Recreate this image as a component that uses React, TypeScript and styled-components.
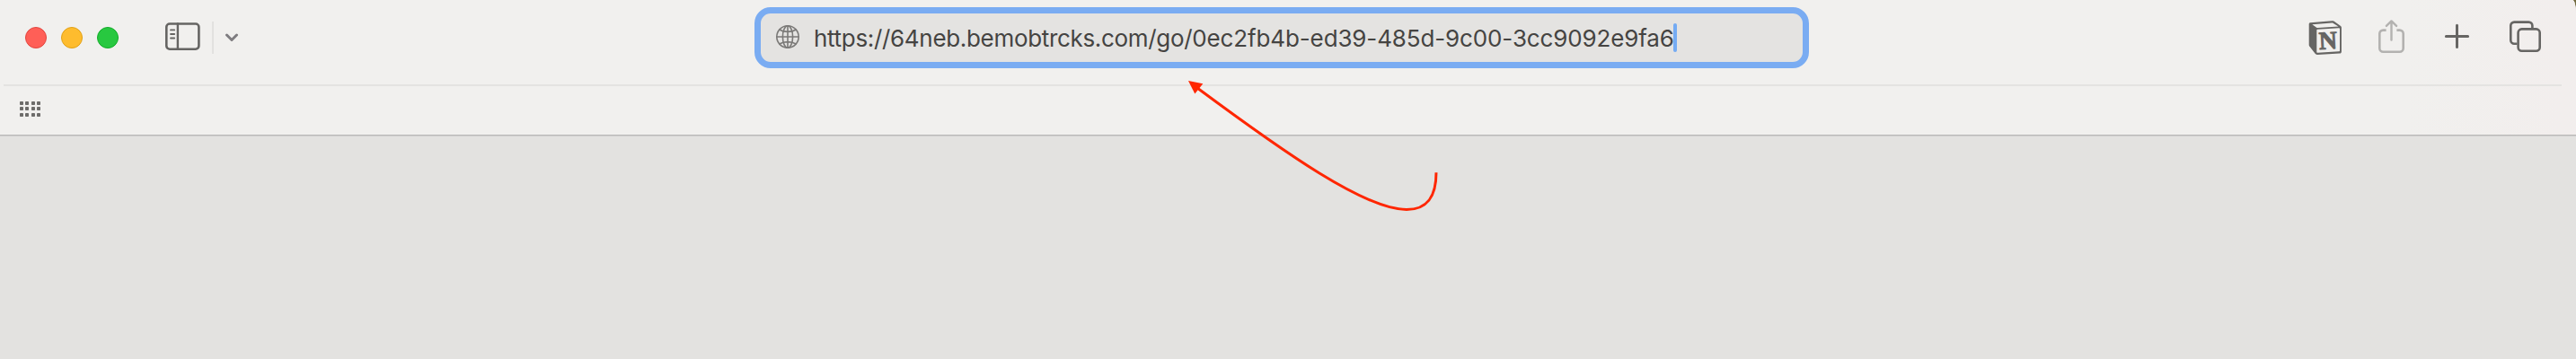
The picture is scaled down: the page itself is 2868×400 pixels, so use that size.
import React from 'react'
import styled, { createGlobalStyle } from 'styled-components'

const INK = '#666563'

const GlobalStyle = createGlobalStyle`
  * {
    box-sizing: border-box;
  }

  body {
    margin: 0;
    background: #716a3e;
  }
`

const Window = styled.div`
  position: relative;
  display: flex;
  flex-direction: column;
  width: 2868px;
  height: 400px;
  overflow: hidden;
  border-top-right-radius: 4px 14px;
  background: #e3e2e0;
  font-family: Inter, 'Liberation Sans', sans-serif;
`

const Chrome = styled.header`
  height: 152px;
  background: linear-gradient(90deg, #f1f0ee 2680px, #f2eeed 2850px);
  border-bottom: 1px solid #cfcecd;
  box-shadow: inset 0 -1px 0 #bab9b8;
`

const Toolbar = styled.div`
  display: flex;
  align-items: center;
  height: 94px;
  padding: 0 36px 10px 28px;
`

const Lights = styled.div`
  display: flex;
  gap: 16px;
  margin-right: 48px;
`

const Light = styled.span<{ $fill: string; $edge: string }>`
  width: 24px;
  height: 24px;
  border-radius: 50%;
  background: ${({ $fill }) => $fill};
  border: 1px solid ${({ $edge }) => $edge};
`

const Icon = styled.svg<{ $width?: number; $color?: string }>`
  display: block;
  flex: none;
  width: ${({ $width = 44 }) => $width}px;
  height: 44px;
  fill: none;
  stroke: ${({ $color = INK }) => $color};
  stroke-width: 2.6;
  stroke-linecap: round;
  stroke-linejoin: round;
`

const Separator = styled.span`
  width: 2px;
  height: 36px;
  margin: 0 8px;
  background: #e2e1df;
`

const AddressBar = styled.div`
  display: flex;
  align-items: center;
  width: 1174px;
  height: 68px;
  margin-left: 570px;
  padding-left: 16px;
  border: 7px solid #7aacf2;
  border-radius: 18px;
  background: #e4e3e1;
`

const Url = styled.span`
  margin-left: 15px;
  padding-top: 2px;
  color: #454442;
  font-size: 26px;
  line-height: 32px;
  white-space: nowrap;
`

const UrlPart = styled.span<{ $spacing: number }>`
  letter-spacing: ${({ $spacing }) => $spacing}px;
`

const Caret = styled.span`
  width: 4px;
  height: 32px;
  margin-left: -1px;
  border-radius: 2px;
  background: #74abf3;
`

const Actions = styled.div`
  display: flex;
  align-items: center;
  gap: 28px;
  margin-left: auto;
`

const Letter = styled.text`
  fill: ${INK};
  stroke: ${INK};
  stroke-width: 1;
  font: 700 28px 'Liberation Serif', serif;
`

const Divider = styled.div`
  height: 2px;
  margin: 0 16px 0 4px;
  background: #e4e3e1;
`

const Favorites = styled.div`
  padding: 17px 22px;
`

const Dots = styled.div`
  display: grid;
  grid-template-columns: repeat(4, 3.8px);
  grid-auto-rows: 3.8px;
  gap: 2.7px;
`

const Dot = styled.span`
  border-radius: 0.8px;
  background: #6d6c6a;
`

const Arrow = styled.svg`
  position: absolute;
  left: 1310px;
  top: 80px;
  width: 310px;
  height: 170px;
`

const App: React.FC = () => (
  <>
    <GlobalStyle />
    <Window>
      <Chrome>
        <Toolbar>
          <Lights>
            <Light $fill="#ff5f57" $edge="#e2463f" />
            <Light $fill="#febc2e" $edge="#e1a116" />
            <Light $fill="#28c840" $edge="#12ac28" />
          </Lights>
          <Icon $width={48} viewBox="0 0 48 44">
            <rect x="5.3" y="6.5" width="36.1" height="28.2" rx="3.6" />
            <path d="M17.9 6.5v28.2" strokeWidth="2.4" />
            <path d="M10 13.4h4.2M10 18h4.2M10 22.5h4.2" strokeWidth="1.8" />
          </Icon>
          <Separator />
          <Icon $width={24} $color="#7f7d80" viewBox="0 0 24 44">
            <path d="M6.5 19l5.5 5.5 5.5-5.5" strokeWidth="3" />
          </Icon>

          <AddressBar>
            <Icon $width={28} $color="#7b7a78" viewBox="0 0 28 44">
              <g strokeWidth="1.6">
                <circle cx="14" cy="21" r="12.2" />
                <ellipse cx="14" cy="21" rx="5.6" ry="12.2" />
                <path d="M14 8.8v24.4M1.8 21h24.4M4.8 13c5 3.2 13.4 3.2 18.4 0M4.8 29c5-3.2 13.4-3.2 18.4 0" />
              </g>
            </Icon>
            <Url>
              <UrlPart $spacing={-0.32}>https://64neb.bemobtrcks.com/go/</UrlPart>
              <UrlPart $spacing={-0.13}>0ec2fb4b-ed39-485d-9c00-3cc9092e9fa6</UrlPart>
            </Url>
            <Caret />
          </AddressBar>

          <Actions>
            <Icon viewBox="0 0 44 44">
              <path
                d="M4 5.2L28.2 3.2c1 0 1.7.1 2.5.6l7 4.9c.9.6 1.2 1.1 1.2 2V37.4c0 1.3-.7 2-2 2.1l-25 1.4c-1.1 0-1.700-.3-2.300-1.100l-6-7.800c-.7-.9-.9-1.500-.9-2.600V7.200c0-1.200.4-1.900 1.300-2z"
                fill={INK}
                stroke="none"
              />
              <path
                d="M6.3 7.3l21.900-1.800c.7 0 1.100.1 1.600.4l5.700 3.700-23.100 1.400c-.7 0-1.100-.1-1.600-.5zM11.300 13.900c0-.8.3-1.100 1-1.200l23.800-1.400c.6 0 .9.300.9.900v24c0 .7-.3 1-1 1.100l-23.600 1.400c-.8 0-1.100-.3-1.100-1z"
                fill="#f1f0ee"
                stroke="none"
              />
              <Letter x="13.8" y="34.4" transform="rotate(-3 24 26)">
                N
              </Letter>
            </Icon>
            <Icon $color="#b3b2b0" viewBox="0 0 44 44">
              <path d="M16.6 13.6h-3.3a4 4 0 0 0-4 4v16.1a4 4 0 0 0 4 4h18.4a4 4 0 0 0 4-4V17.6a4 4 0 0 0-4-4h-3.3" strokeLinecap="butt" />
              <path d="M22.5 24.6V3.7M16.9 8.9l5.6-5.5 5.6 5.5" strokeWidth="2.4" />
            </Icon>
            <Icon viewBox="0 0 44 44">
              <path d="M11.4 20.4h24.2M23.5 8.3v24.2" strokeWidth="3" />
            </Icon>
            <Icon $width={48} viewBox="0 0 48 44">
              <path d="M18.5 28.7h-3.2a4 4 0 0 1-4-4V8.6a4 4 0 0 1 4-4h16.1a4 4 0 0 1 4 4v3.2" strokeLinecap="butt" />
              <rect x="19.6" y="12.4" width="24.1" height="24.3" rx="4" />
            </Icon>
          </Actions>
        </Toolbar>
        <Divider />
        <Favorites>
          <Dots>
            {Array.from({ length: 12 }, (_, i) => (
              <Dot key={i} />
            ))}
          </Dots>
        </Favorites>
      </Chrome>

      <Arrow viewBox="1310 80 310 170" fill="none">
        <path
          d="M1599 192.3C1599 218 1590 233.5 1566 233.5C1520 233.5 1430 170 1333 98"
          stroke="#ff2600"
          strokeWidth="3"
        />
        <path d="M1323 90l16.3 3.3-9 11.3z" fill="#ff2600" />
      </Arrow>
    </Window>
  </>
)

export default App
